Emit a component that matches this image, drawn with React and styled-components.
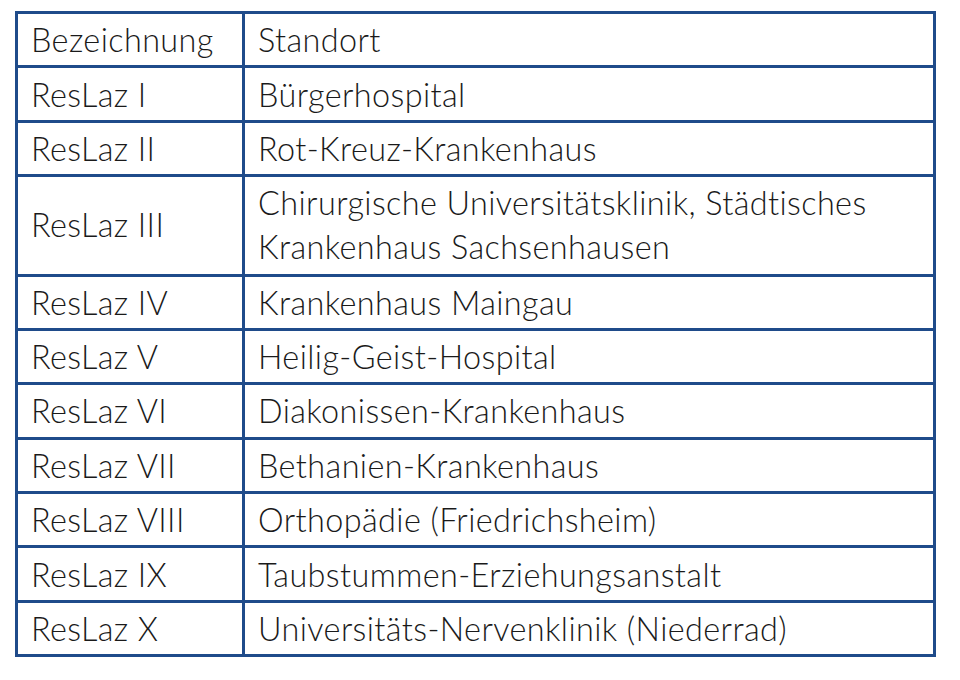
import React from "react";
import styled, { createGlobalStyle } from "styled-components";

const Global = createGlobalStyle`
  html, body { margin: 0; padding: 0; background: #ffffff; }
  body { font-family: "Lato", "Liberation Sans", sans-serif; }
`;

const Page = styled.div`
  width: 960px;
  height: 680px;
  padding: 11px 0 0 15px;
  box-sizing: border-box;
  overflow: hidden;
`;

const Table = styled.table`
  border-collapse: collapse;
  width: 921px;
  table-layout: fixed;
  color: #1a1a1a;
  font-size: 32.4px;
  font-weight: 300;
  letter-spacing: 0.4px;
`;

const Cell = styled.td`
  border: 3px solid #1f4b8a;
  padding: 4.2px 12px 4.2px 13px;
  line-height: ${(p) => (p.$multi ? 44 : 43)}px;
  box-sizing: border-box;
  vertical-align: middle;
  white-space: nowrap;
  width: ${(p) => (p.$first ? "227px" : "auto")};
`;

const rows = [
  ["Bezeichnung", "Standort"],
  ["ResLaz I", "Bürgerhospital"],
  ["ResLaz II", "Rot-Kreuz-Krankenhaus"],
  ["ResLaz III", ["Chirurgische Universitätsklinik, Städtisches", "Krankenhaus Sachsenhausen"]],
  ["ResLaz IV", "Krankenhaus Maingau"],
  ["ResLaz V", "Heilig-Geist-Hospital"],
  ["ResLaz VI", "Diakonissen-Krankenhaus"],
  ["ResLaz VII", "Bethanien-Krankenhaus"],
  ["ResLaz VIII", "Orthopädie (Friedrichsheim)"],
  ["ResLaz IX", "Taubstummen-Erziehungsanstalt"],
  ["ResLaz X", "Universitäts-Nervenklinik (Niederrad)"],
];

export default function App() {
  return (
    <Page>
      <Global />
      <Table>
        <tbody>
          {rows.map(([a, b]) => {
            const multi = Array.isArray(b);
            return (
              <tr key={a}>
                <Cell $first $multi={multi}>{a}</Cell>
                <Cell $multi={multi}>
                  {multi ? (
                    <>
                      {b[0]}
                      <br />
                      {b[1]}
                    </>
                  ) : (
                    b
                  )}
                </Cell>
              </tr>
            );
          })}
        </tbody>
      </Table>
    </Page>
  );
}
